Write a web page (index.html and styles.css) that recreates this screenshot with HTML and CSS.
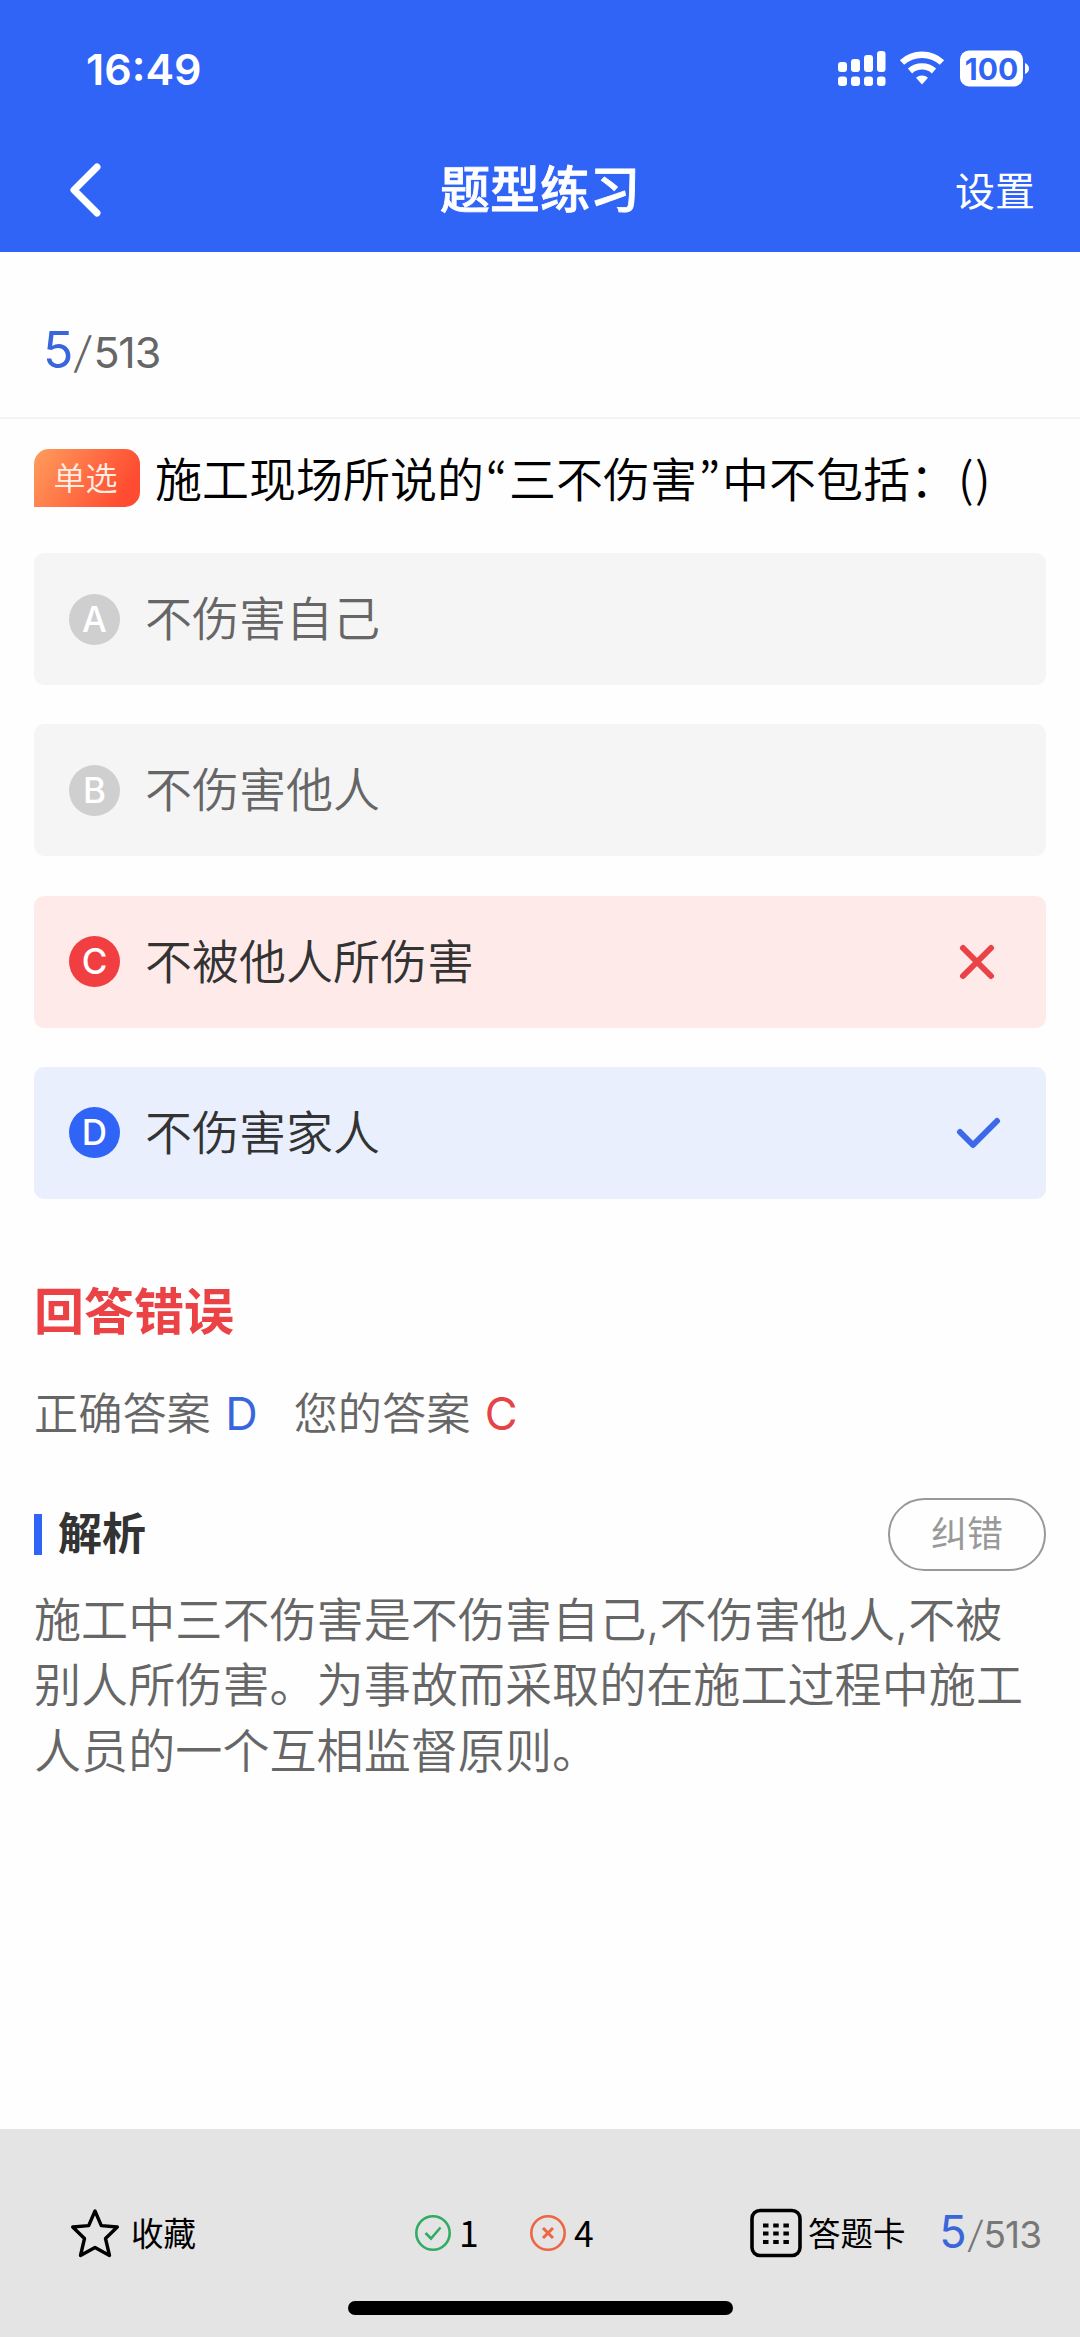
FILE: index.html
```html
<!DOCTYPE html>
<html lang="zh-CN">
<head>
<meta charset="utf-8">
<title>题型练习</title>
<link rel="stylesheet" href="styles.css">
</head>
<body>
<div class="app">
  <header class="header">
    <div class="status">
      <span class="time">16:49</span>
      <svg class="status-icons" width="194" height="40" viewBox="0 0 194 40" fill="#fff">
        <rect x="3" y="14" width="9" height="10" rx="3"/><rect x="16" y="11" width="9" height="13" rx="3"/><rect x="29" y="7" width="9" height="17" rx="3"/><rect x="42" y="3" width="8.500" height="21" rx="3"/>
        <rect x="3" y="28.500" width="9" height="9.500" rx="3"/><rect x="16" y="28.500" width="9" height="9.500" rx="3"/><rect x="29" y="28.500" width="9" height="9.500" rx="3"/><rect x="42" y="28.500" width="8.500" height="9.500" rx="3"/>
        <g fill="none" stroke="#fff" stroke-width="6.400"><path d="M67 14.500a29.500 29.500 0 0 1 40 0"/><path d="M75 23a18 18 0 0 1 24 0"/></g>
        <path d="M87 36.500l-6-6.800a9 9 0 0 1 12 0z"/>
        <rect x="125" y="2.500" width="63" height="36" rx="9"/>
        <path d="M190 15q4 2 4 5.500t-4 5.500z"/>
        <text class="battery-level" x="156.500" y="31.500">100</text>
      </svg>
    </div>
    <nav class="navbar">
      <svg class="back" width="40" height="60" viewBox="0 0 40 60"><path d="M33 7L10 30l23 23" fill="none" stroke="#fff" stroke-width="7" stroke-linecap="round" stroke-linejoin="round"/></svg>
      <h1 class="title">题型练习</h1>
      <span class="settings">设置</span>
    </nav>
  </header>

  <div class="progress"><span class="current">5</span><span class="slash">/</span><span class="total">513</span></div>

  <main class="content">
    <div class="question"><span class="tag">单选</span><span class="stem">施工现场所说的<span class="quote">“</span>三不伤害<span class="quote">”</span>中不包括：<span class="paren">()</span></span></div>
    <ul class="options">
      <li class="option"><span class="letter">A</span><span class="label">不伤害自己</span></li>
      <li class="option"><span class="letter">B</span><span class="label">不伤害他人</span></li>
      <li class="option wrong"><span class="letter">C</span><span class="label">不被他人所伤害</span>
        <svg class="mark" width="48" height="48" viewBox="0 0 48 48"><path d="M10 10L38 38M38 10L10 38"/></svg></li>
      <li class="option right"><span class="letter">D</span><span class="label">不伤害家人</span>
        <svg class="mark" width="48" height="48" viewBox="0 0 48 48"><path d="M7 23L20 36L44 12"/></svg></li>
    </ul>
    <h2 class="verdict">回答错误</h2>
    <div class="answers"><span class="answer">正确答案 <b class="blue">D</b></span><span class="answer">您的答案 <b class="red">C</b></span></div>
    <div class="analysis-head"><h3 class="analysis-title">解析</h3><button class="report">纠错</button></div>
    <p class="analysis">施工中三不伤害是不伤害自己,不伤害他人,不被<br>别人所伤害。为事故而采取的在施工过程中施工<br>人员的一个互相监督原则。</p>
  </main>

  <footer class="footer">
    <div class="toolbar">
      <div class="tool favorite">
        <svg width="50" height="52" viewBox="0 0 50 52"><path d="M25 4l6.300 14.600L47.300 20 35.500 31.500 39.500 48.500 25 40.500 10.500 48.500 14.500 31.500 2.700 20l16-1.400z" fill="none" stroke="#000" stroke-width="3.400" stroke-linejoin="round"/></svg>
        <span>收藏</span>
      </div>
      <div class="tool correct">
        <svg width="38" height="38" viewBox="0 0 38 38" fill="none" stroke="#31ad63" stroke-width="2.600"><circle cx="19" cy="19" r="16.700"/><path d="M11.500 19l5.500 5.500 9.500-11"/></svg>
        <span>1</span>
      </div>
      <div class="tool incorrect">
        <svg width="38" height="38" viewBox="0 0 38 38" fill="none" stroke="#ee6543" stroke-width="2.600"><circle cx="19" cy="19" r="16.700"/><path d="M14 14l10 10M24 14L14 24" stroke-width="3"/></svg>
        <span>4</span>
      </div>
      <div class="tool card">
        <svg width="52" height="50" viewBox="0 0 52 50"><rect x="2" y="2.500" width="48" height="45" rx="8" fill="none" stroke="#000" stroke-width="3.600"/><path d="M13 17.500h26M13 25.500h26M13 34h26" stroke="#000" stroke-width="4.200" stroke-dasharray="5.500 4.700"/></svg>
        <span>答题卡</span>
      </div>
      <div class="count"><span class="current">5</span><span class="slash">/</span><span class="total">513</span></div>
    </div>
    <div class="home-bar"></div>
  </footer>
</div>
</body>
</html>
```
FILE: styles.css
```css
* { box-sizing: border-box; }
body { margin: 0; background: #fefefe; font-family: Inter, "Noto Sans CJK SC", sans-serif; font-weight: 350; color: #000; }
h1, h2, h3, p, ul { margin: 0; padding: 0; }
svg { display: block; flex: none; }

.app { width: 1080px; height: 2337px; display: flex; flex-direction: column; overflow: hidden; }

.header { height: 252px; background: #3064f7; color: #fff; }
.status { height: 126px; padding: 12px 51px 0 86px; display: flex; align-items: center; justify-content: space-between; }
.time { font-size: 43px; line-height: 52px; font-weight: 600; }
.status-icons { margin-top: -2px; }
.battery-level { font: 700 30px Inter, sans-serif; text-anchor: middle; fill: #3064f7; }
.navbar { height: 126px; padding: 2px 45px 0 64px; display: grid; grid-template-columns: 1fr auto 1fr; align-items: center; }
.title { font-size: 50px; line-height: 60px; font-weight: 500; -webkit-text-stroke: 0.8px #fff; padding-right: 19px; }
.settings { justify-self: end; font-size: 40px; line-height: 50px; padding-top: 4px; font-weight: 400; }

.progress { height: 167px; padding: 63px 43px 0; border-bottom: 2px solid #f4f4f4; display: flex; align-items: baseline; line-height: 70px; }
.current { font-size: 50px; color: #3a66dc; font-weight: 400; }
.slash { font-size: 43px; color: #666; font-weight: 350; width: 20px; text-align: center; transform: skewX(-8deg); }
.total { font-size: 43px; color: #666; font-weight: 400; letter-spacing: -1.200px; }

.content { padding: 29px 34px 0; }
.question { display: flex; align-items: center; height: 60px; gap: 15px; }
.tag { width: 106px; height: 58px; border-radius: 15px 15px 15px 0; background: linear-gradient(120deg, #ff9d5c, #ff4b31 85%); color: #ffeee4; font-size: 32px; line-height: 59px; text-align: center; padding-right: 3px; }
.stem { font-size: 47px; line-height: 60px; white-space: nowrap; }
.quote { display: inline-block; width: 25px; text-align: center; font-family: "Noto Sans CJK KR", sans-serif; }
.paren { font-family: "Noto Sans CJK SC", sans-serif; letter-spacing: 1.500px; margin-left: 1px; }

.options { list-style: none; margin-top: 45px; display: flex; flex-direction: column; gap: 39.300px; }
.option { height: 132px; border-radius: 10px; background: #f5f5f5; padding: 0 45px 0 35px; display: flex; align-items: center; color: #666; font-size: 47px; line-height: 60px; }
.letter { width: 51px; height: 51px; border-radius: 50%; background: #d0cfd0; color: #fff; font-size: 35px; line-height: 51px; font-weight: 500; text-align: center; }
.label { margin-left: 25px; }
.mark { margin-left: auto; fill: none; stroke-width: 6; stroke-linecap: round; stroke-linejoin: round; }
.wrong { background: #feebe9; color: #333; }
.wrong .letter { background: #f13f41; }
.wrong .mark { stroke: #e94347; }
.right { background: #e9effd; color: #333; }
.right .letter { background: #3064f7; }
.right .mark { stroke: #3b69ea; }

.verdict { margin-top: 83px; font-size: 50px; line-height: 60px; color: #ea4245; font-weight: 700; }
.answers { margin-top: 42px; display: flex; gap: 36px; font-size: 44.200px; line-height: 60px; color: #666; }
.answers b { font-weight: 400; font-size: 45px; margin-left: 2px; }
.blue { color: #3a66dc; }
.red { color: #e54348; }
.analysis-head { margin-top: 54px; height: 73px; display: flex; align-items: center; justify-content: space-between; }
.analysis-title { font-size: 44px; line-height: 41px; font-weight: 700; color: #333; border-left: 8px solid #3064f7; padding-left: 16px; }
.report { width: 158px; height: 73px; border: 2.500px solid #999; border-radius: 37px; background: none; color: #999; font: 400 36px/1 Inter, "Noto Sans CJK SC", sans-serif; padding: 0; }
.analysis { margin-top: 16px; font-size: 47.100px; line-height: 65.500px; color: #666; white-space: nowrap; }

.footer { margin-top: auto; height: 208px; background: #e4e4e4; display: flex; flex-direction: column; align-items: center; justify-content: space-between; padding: 74px 0 22px; }
.toolbar { width: 1080px; height: 60px; padding: 0 39px 0 70px; display: flex; align-items: center; font-size: 32.500px; font-weight: 400; }
.tool { display: flex; align-items: center; }
.tool span { margin-top: -3px; }
.favorite { width: 344px; gap: 11px; }
.correct, .incorrect { font-family: "Noto Sans CJK SC", sans-serif; font-size: 35.500px; gap: 7px; }
.correct { width: 115px; }
.incorrect { width: 221px; }
.card { gap: 6px; }
.count { margin-left: auto; margin-top: -3px; display: flex; align-items: baseline; }
.count .current { font-size: 45px; }
.count .slash { font-size: 37px; width: 17px; color: #777; }
.count .total { font-size: 37px; color: #777; letter-spacing: -1px; }
.home-bar { width: 385px; height: 14px; border-radius: 7px; background: #000; }
```
